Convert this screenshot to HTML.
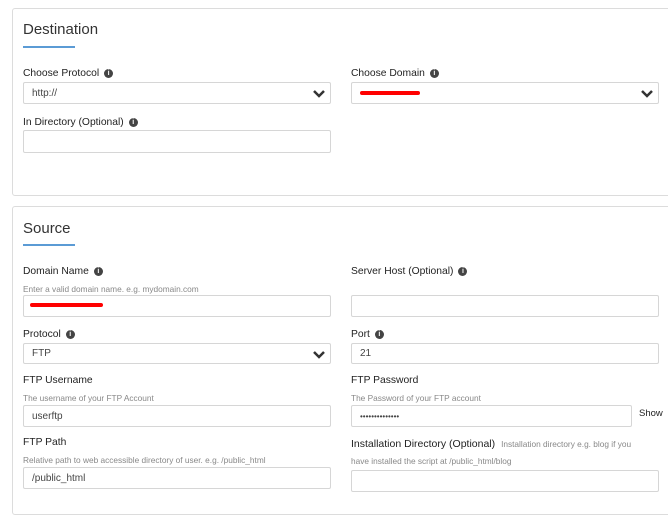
<!DOCTYPE html>
<html><head><style>
body{margin:0;width:668px;height:520px;background:#fff;font-family:"Liberation Sans",sans-serif;position:relative;overflow:hidden;color:#222}
.p{position:absolute;left:12px;width:670px;border:1px solid #dcdcdc;border-radius:3px;background:#fff}
.a{position:absolute;white-space:nowrap}
.t{font-size:15px;color:#333}
.u{height:2px;background:#5b9bd5;width:52px}
.l{font-size:10.3px;color:#222}
.h{font-size:8.3px;color:#888}
.b{position:absolute;border:1px solid #d6d6d6;border-radius:2px;background:#fff;box-sizing:border-box;font-size:10px;color:#444;padding-left:8px;display:flex;align-items:center}
.i{display:inline-block;width:9px;height:9px;border-radius:50%;background:#444;color:#fff;font-size:7px;text-align:center;line-height:9px;font-weight:bold;margin-left:5px;vertical-align:middle}
.c{position:absolute;right:4px;top:5px}
.r{position:absolute;height:4px;background:#f00;border-radius:2px}
</style></head><body>
<div class="p" style="top:8px;height:186px"></div>
<div class="p" style="top:206px;height:307px"></div>

<div class="a t" style="left:23px;top:21px">Destination</div>
<div class="a u" style="left:23px;top:46px"></div>
<div class="a l" style="left:23px;top:68px">Choose Protocol<span class="i">i</span></div>
<div class="b" style="left:23px;top:82px;width:308px;height:22px">http://<svg class="c" width="14" height="11" viewBox="0 0 14 11"><path d="M2 3l5 5 5-5" stroke="#333" stroke-width="2.5" fill="none"/></svg></div>
<div class="a l" style="left:351px;top:68px">Choose Domain<span class="i">i</span></div>
<div class="b" style="left:351px;top:82px;width:308px;height:22px"><svg class="c" width="14" height="11" viewBox="0 0 14 11"><path d="M2 3l5 5 5-5" stroke="#333" stroke-width="2.5" fill="none"/></svg></div>
<div class="r" style="left:360px;top:91px;width:60px"></div>
<div class="a l" style="left:23px;top:117px">In Directory (Optional)<span class="i">i</span></div>
<div class="b" style="left:23px;top:130px;width:308px;height:23px"></div>

<div class="a t" style="left:23px;top:220px">Source</div>
<div class="a u" style="left:23px;top:244px"></div>
<div class="a l" style="left:23px;top:266px">Domain Name<span class="i">i</span></div>
<div class="a h" style="left:23px;top:284px">Enter a valid domain name. e.g. mydomain.com</div>
<div class="b" style="left:23px;top:295px;width:308px;height:22px"></div>
<div class="r" style="left:30px;top:303px;width:73px"></div>
<div class="a l" style="left:351px;top:266px">Server Host (Optional)<span class="i">i</span></div>
<div class="b" style="left:351px;top:295px;width:308px;height:22px"></div>

<div class="a l" style="left:23px;top:329px">Protocol<span class="i">i</span></div>
<div class="b" style="left:23px;top:343px;width:308px;height:21px">FTP<svg class="c" width="14" height="11" viewBox="0 0 14 11"><path d="M2 3l5 5 5-5" stroke="#333" stroke-width="2.5" fill="none"/></svg></div>
<div class="a l" style="left:351px;top:329px">Port<span class="i">i</span></div>
<div class="b" style="left:351px;top:343px;width:308px;height:21px">21</div>

<div class="a l" style="left:23px;top:375px">FTP Username</div>
<div class="a h" style="left:23px;top:393px">The username of your FTP Account</div>
<div class="b" style="left:23px;top:405px;width:308px;height:22px">userftp</div>
<div class="a l" style="left:351px;top:375px">FTP Password</div>
<div class="a h" style="left:351px;top:393px">The Password of your FTP account</div>
<div class="b" style="left:351px;top:405px;width:281px;height:22px;font-size:8px">••••••••••••••</div>
<div class="a l" style="left:639px;top:408px;font-size:9.5px">Show</div>

<div class="a l" style="left:23px;top:437px">FTP Path</div>
<div class="a h" style="left:23px;top:455px">Relative path to web accessible directory of user. e.g. /public_html</div>
<div class="b" style="left:23px;top:467px;width:308px;height:22px">/public_html</div>
<div class="a l" style="left:351px;top:438px;font-size:10.5px">Installation Directory (Optional) <span class="h" style="margin-left:3px">Installation directory e.g. blog if you</span></div>
<div class="a h" style="left:351px;top:456px">have installed the script at /public_html/blog</div>
<div class="b" style="left:351px;top:470px;width:308px;height:22px"></div>
</body></html>
